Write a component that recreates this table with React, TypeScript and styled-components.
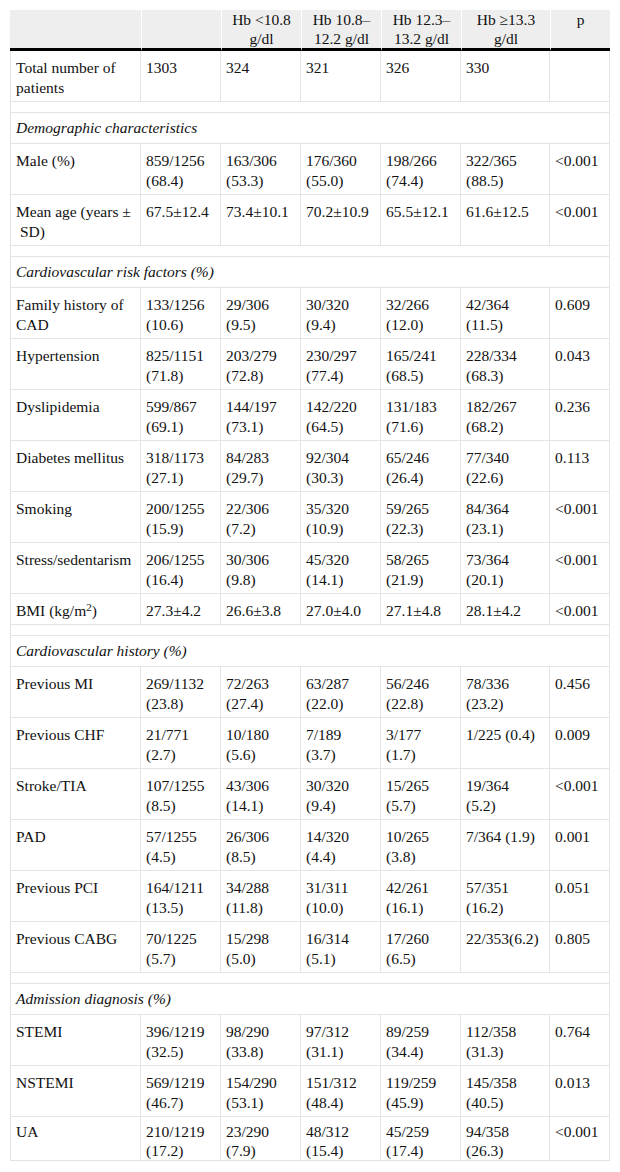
import React from "react";
import styled, { createGlobalStyle } from "styled-components";

const Global = createGlobalStyle`
  html, body { margin: 0; padding: 0; background: #fff; }
  body { padding: 10px 10px 0 10px; font-family: "Liberation Serif", "Times New Roman", serif; }
`;

const serif = `"Liberation Serif", "Times New Roman", serif`;

const Table = styled.table`
  width: 600px;
  table-layout: fixed;
  border-collapse: separate;
  border-spacing: 0;
  font-family: ${serif};
  font-size: 15.5px;
  line-height: 20px;
  color: #111;
`;

const HeadCell = styled.th`
  font-family: ${serif};
  font-size: 15.5px;
  background: #eeeeee;
  font-weight: normal;
  text-align: center;
  vertical-align: top;
  padding: 0 4px;
  line-height: 19px;
  height: 38px;
  border-bottom: 3px solid #000;
  & + & { border-left: 1px solid #fff; }
`;

const Cell = styled.td<{ $last?: boolean }>`
  font-family: ${serif};
  font-size: 15.5px;
  vertical-align: top;
  text-align: left;
  white-space: pre-line;
  padding: ${(p) => (p.$last ? "6px 5px 0 5px" : "7px 5px 3px 5px")};
  line-height: ${(p) => (p.$last ? "18.5px" : "20px")};
  border-right: 1px solid #e4e4e4;
  border-bottom: 1px solid #e4e4e4;
  &:first-child { border-left: 1px solid #e4e4e4; }
`;

const SectionCell = styled.td`
  font-family: ${serif};
  font-size: 15.5px;
  font-style: italic;
  line-height: 20px;
  padding: 5px 5px;
  border: 1px solid #e4e4e4;
  border-top: none;
`;

const SpacerCell = styled.td`
  height: 10px;
  padding: 0;
  font-size: 0;
  line-height: 0;
  border: 1px solid #e4e4e4;
  border-top: none;
`;

const Sup = styled.sup`
  font-size: 0.72em;
  line-height: 0;
  vertical-align: 0.45em;
`;

type Row =
  | { kind: "data"; label: React.ReactNode; values: string[] }
  | { kind: "section"; title: string }
  | { kind: "spacer" };

const rows: Row[] = [
  { kind: "data", label: "Total number of\npatients", values: ["1303", "324", "321", "326", "330", ""] },
  { kind: "spacer" },
  { kind: "section", title: "Demographic characteristics" },
  { kind: "data", label: "Male (%)", values: ["859/1256\n(68.4)", "163/306\n(53.3)", "176/360\n(55.0)", "198/266\n(74.4)", "322/365\n(88.5)", "<0.001"] },
  { kind: "data", label: "Mean age (years ±\n\u00a0SD)", values: ["67.5±12.4", "73.4±10.1", "70.2±10.9", "65.5±12.1", "61.6±12.5", "<0.001"] },
  { kind: "spacer" },
  { kind: "section", title: "Cardiovascular risk factors (%)" },
  { kind: "data", label: "Family history of\nCAD", values: ["133/1256\n(10.6)", "29/306\n(9.5)", "30/320\n(9.4)", "32/266\n(12.0)", "42/364\n(11.5)", "0.609"] },
  { kind: "data", label: "Hypertension", values: ["825/1151\n(71.8)", "203/279\n(72.8)", "230/297\n(77.4)", "165/241\n(68.5)", "228/334\n(68.3)", "0.043"] },
  { kind: "data", label: "Dyslipidemia", values: ["599/867\n(69.1)", "144/197\n(73.1)", "142/220\n(64.5)", "131/183\n(71.6)", "182/267\n(68.2)", "0.236"] },
  { kind: "data", label: "Diabetes mellitus", values: ["318/1173\n(27.1)", "84/283\n(29.7)", "92/304\n(30.3)", "65/246\n(26.4)", "77/340\n(22.6)", "0.113"] },
  { kind: "data", label: "Smoking", values: ["200/1255\n(15.9)", "22/306\n(7.2)", "35/320\n(10.9)", "59/265\n(22.3)", "84/364\n(23.1)", "<0.001"] },
  { kind: "data", label: "Stress/sedentarism", values: ["206/1255\n(16.4)", "30/306\n(9.8)", "45/320\n(14.1)", "58/265\n(21.9)", "73/364\n(20.1)", "<0.001"] },
  { kind: "data", label: <>BMI (kg/m<Sup>2</Sup>)</>, values: ["27.3±4.2", "26.6±3.8", "27.0±4.0", "27.1±4.8", "28.1±4.2", "<0.001"] },
  { kind: "spacer" },
  { kind: "section", title: "Cardiovascular history (%)" },
  { kind: "data", label: "Previous MI", values: ["269/1132\n(23.8)", "72/263\n(27.4)", "63/287\n(22.0)", "56/246\n(22.8)", "78/336\n(23.2)", "0.456"] },
  { kind: "data", label: "Previous CHF", values: ["21/771\n(2.7)", "10/180\n(5.6)", "7/189\n(3.7)", "3/177\n(1.7)", "1/225 (0.4)", "0.009"] },
  { kind: "data", label: "Stroke/TIA", values: ["107/1255\n(8.5)", "43/306\n(14.1)", "30/320\n(9.4)", "15/265\n(5.7)", "19/364\n(5.2)", "<0.001"] },
  { kind: "data", label: "PAD", values: ["57/1255\n(4.5)", "26/306\n(8.5)", "14/320\n(4.4)", "10/265\n(3.8)", "7/364 (1.9)", "0.001"] },
  { kind: "data", label: "Previous PCI", values: ["164/1211\n(13.5)", "34/288\n(11.8)", "31/311\n(10.0)", "42/261\n(16.1)", "57/351\n(16.2)", "0.051"] },
  { kind: "data", label: "Previous CABG", values: ["70/1225\n(5.7)", "15/298\n(5.0)", "16/314\n(5.1)", "17/260\n(6.5)", "22/353(6.2)", "0.805"] },
  { kind: "spacer" },
  { kind: "section", title: "Admission diagnosis (%)" },
  { kind: "data", label: "STEMI", values: ["396/1219\n(32.5)", "98/290\n(33.8)", "97/312\n(31.1)", "89/259\n(34.4)", "112/358\n(31.3)", "0.764"] },
  { kind: "data", label: "NSTEMI", values: ["569/1219\n(46.7)", "154/290\n(53.1)", "151/312\n(48.4)", "119/259\n(45.9)", "145/358\n(40.5)", "0.013"] },
  { kind: "data", label: "UA", values: ["210/1219\n(17.2)", "23/290\n(7.9)", "48/312\n(15.4)", "45/259\n(17.4)", "94/358\n(26.3)", "<0.001"] },
];

const widths = [131, 80, 80, 80, 80, 89, 60];

export default function App() {
  return (
    <>
      <Global />
      <Table>
        <colgroup>
          {widths.map((w, i) => (
            <col key={i} style={{ width: w }} />
          ))}
        </colgroup>
        <thead>
          <tr>
            <HeadCell />
            <HeadCell />
            <HeadCell>Hb &lt;10.8<br />g/dl</HeadCell>
            <HeadCell>Hb 10.8–<br />12.2 g/dl</HeadCell>
            <HeadCell>Hb 12.3–<br />13.2 g/dl</HeadCell>
            <HeadCell>Hb ≥13.3<br />g/dl</HeadCell>
            <HeadCell>p</HeadCell>
          </tr>
        </thead>
        <tbody>
          {rows.map((r, i) => {
            if (r.kind === "spacer")
              return (
                <tr key={i}>
                  <SpacerCell colSpan={7} />
                </tr>
              );
            if (r.kind === "section")
              return (
                <tr key={i}>
                  <SectionCell colSpan={7}>{r.title}</SectionCell>
                </tr>
              );
            const last = i === rows.length - 1;
            return (
              <tr key={i}>
                <Cell $last={last}>{r.label}</Cell>
                {r.values.map((v, j) => (
                  <Cell key={j} $last={last}>{v}</Cell>
                ))}
              </tr>
            );
          })}
        </tbody>
      </Table>
    </>
  );
}
